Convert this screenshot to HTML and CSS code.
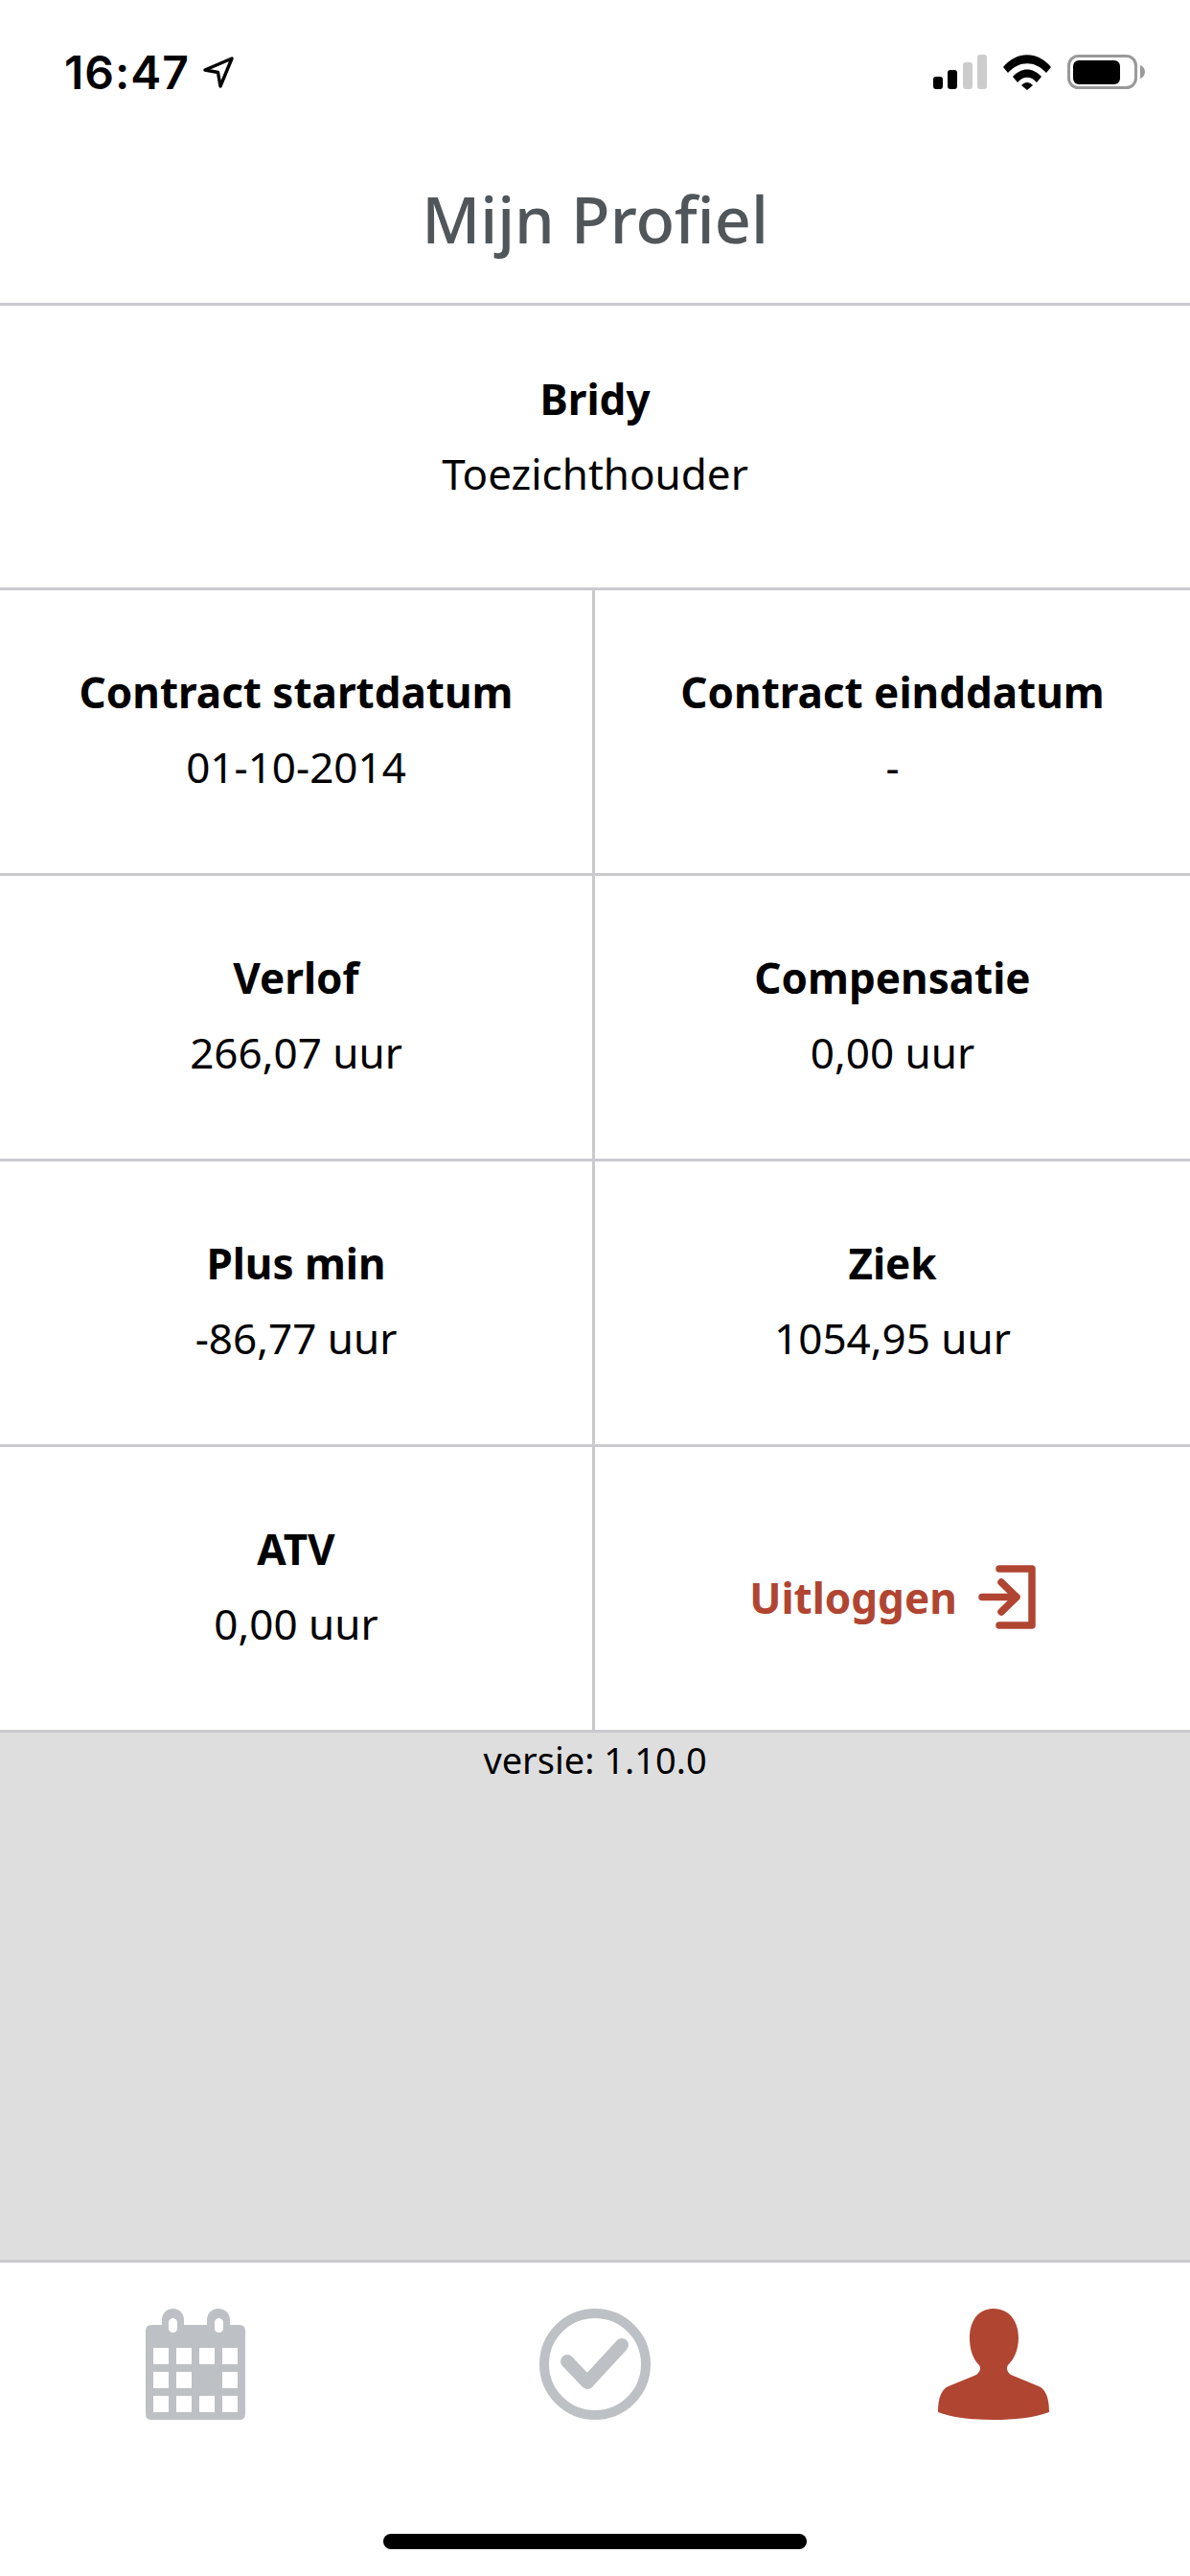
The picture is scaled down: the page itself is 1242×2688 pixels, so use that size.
FILE: index.html
```html
<!DOCTYPE html>
<html lang="nl">

<head>
    <meta charset="UTF-8">
    <title>Mijn Profiel</title>
    <meta name="viewport" content="width=device-width, initial-scale=1.0">
    <link rel="stylesheet" href="styles.css">
</head>

<body>
    <div class="app">

        <!-- Status bar -->
        <div class="status-bar">
            <div class="status-left">
                <span class="time">16:47</span>
                <svg class="loc-icon" viewBox="0 0 32 33">
                    <path d="M2 14 L30 2 L18 31 L15.5 16.5 Z" fill="none" stroke="#000" stroke-width="3.4" stroke-linejoin="round"/>
                </svg>
            </div>
            <div class="status-right">
                <svg class="signal-icon" viewBox="0 0 56 36">
                    <rect x="0" y="23" width="10" height="13" rx="3" fill="#000"/>
                    <rect x="15" y="16" width="10" height="20" rx="3" fill="#000"/>
                    <rect x="31" y="8" width="10" height="28" rx="3" fill="#ccc"/>
                    <rect x="46" y="0" width="10" height="36" rx="3" fill="#ccc"/>
                </svg>
                <svg class="wifi-icon" viewBox="0 0 50 37">
                    <path d="M0 13 C14 -4 36 -4 50 13 L45 19 C33 6 17 6 5 19 Z" fill="#000"/>
                    <path d="M10 23 C19 13 31 13 40 23 L35 29 C29 22 21 22 15 29 Z" fill="#000"/>
                    <path d="M19 32 C23 28 27 28 31 32 L25 37 Z" fill="#000"/>
                </svg>
                <svg class="battery-icon" viewBox="0 0 81 36">
                    <rect x="1.5" y="1.5" width="70" height="33" rx="10" fill="none" stroke="#999" stroke-width="3"/>
                    <rect x="6" y="6" width="49" height="25" rx="6" fill="#000"/>
                    <path d="M76 11 C79 12 81 15 81 18 C81 21 79 24 76 25 Z" fill="#999"/>
                </svg>
            </div>
        </div>

        <div class="page-title">Mijn Profiel</div>

        <div class="user-row">
            <div class="label">Bridy</div>
            <div class="value">Toezichthouder</div>
        </div>

        <div class="info-grid">
            <div class="cell">
                <div class="label">Contract startdatum</div>
                <div class="value">01-10-2014</div>
            </div>
            <div class="cell">
                <div class="label">Contract einddatum</div>
                <div class="value">-</div>
            </div>
            <div class="cell">
                <div class="label">Verlof</div>
                <div class="value">266,07 uur</div>
            </div>
            <div class="cell">
                <div class="label">Compensatie</div>
                <div class="value">0,00 uur</div>
            </div>
            <div class="cell">
                <div class="label">Plus min</div>
                <div class="value">-86,77 uur</div>
            </div>
            <div class="cell">
                <div class="label">Ziek</div>
                <div class="value">1054,95 uur</div>
            </div>
            <div class="cell">
                <div class="label">ATV</div>
                <div class="value">0,00 uur</div>
            </div>
            <div class="cell">
                <div class="logout">
                    <span>Uitloggen</span>
                    <svg class="logout-icon" viewBox="0 0 60 67">
                        <path d="M22 4 H56 V63 H22" fill="none" stroke="#b04532" stroke-width="7.5" stroke-linecap="round" stroke-linejoin="round"/>
                        <path d="M4 33.5 H40 M24 18 L40 33.5 L24 49" fill="none" stroke="#b04532" stroke-width="7.5" stroke-linecap="round" stroke-linejoin="round"/>
                    </svg>
                </div>
            </div>
        </div>

        <div class="version-panel">versie: 1.10.0</div>

        <!-- Bottom navigation -->
        <div class="tab-bar">
            <div class="tab tab-calendar">
                <svg class="calendar" viewBox="0 0 104 116">
                    <path fill-rule="evenodd" fill="#bdc0c5" d="M6 17 H17 V12 C17 -4 40 -4 40 12 V17 H64 V12 C64 -4 88 -4 88 12 V17 H98 Q104 17 104 23 V110 Q104 116 98 116 H6 Q0 116 0 110 V23 Q0 17 6 17 Z
                        M24 14.5 V20.5 C24 26.5 33 26.5 33 20.5 V14.5 C33 8.5 24 8.5 24 14.5 Z
                        M72 14.5 V20.5 C72 26.5 81 26.5 81 20.5 V14.5 C81 8.5 72 8.5 72 14.5 Z
                        M8 41 V58 H24 V41 Z M32 41 V58 H48 V41 Z M56 41 V58 H72 V41 Z M80 41 V58 H96 V41 Z
                        M8 66 V83 H24 V66 Z M32 66 V83 H48 V66 Z M80 66 V83 H96 V66 Z
                        M8 91 V108 H24 V91 Z M32 91 V108 H48 V91 Z M56 91 V108 H72 V91 Z M80 91 V108 H96 V91 Z"/>
                </svg>
            </div>
            <div class="tab">
                <svg class="check" viewBox="0 0 116 116">
                    <circle cx="58" cy="58" r="53" fill="none" stroke="#bdc0c5" stroke-width="10"/>
                    <path d="M29 55 L50 77 L86 38" fill="none" stroke="#bdc0c5" stroke-width="14" stroke-linecap="round" stroke-linejoin="round"/>
                </svg>
            </div>
            <div class="tab tab-person">
                <svg class="person" viewBox="0 0 116 116">
                    <path fill="#b04532" d="M58 0 C75 0 84 14 84 30 C84 44 79 53 73 59 C71 62 72 66 76 69 L105 81 C112 84 116 92 116 108 C100 114 80 116 58 116 C36 116 16 114 0 108 C0 92 4 84 11 81 L40 69 C44 66 45 62 43 59 C37 53 33 44 33 30 C33 14 41 0 58 0 Z"/>
                </svg>
            </div>
        </div>

        <div class="home-bar">
            <div class="home-indicator"></div>
        </div>
    </div>
</body>

</html>
```

FILE: styles.css
```css
body {
    margin: 0;
    font-family: "Noto Sans", "Open Sans", sans-serif;
    background-color: #fff;
    color: #000;
}

.app {
    width: 1242px;
    height: 2688px;
    display: flex;
    flex-direction: column;
}

.status-bar {
    height: 120px;
    box-sizing: border-box;
    padding: 57px 47px 0 67px;
    display: flex;
    justify-content: space-between;
    align-items: flex-start;
}

.status-left {
    display: flex;
    align-items: center;
    gap: 14px;
}

.time {
    font-family: "Inter", sans-serif;
    font-weight: 600;
    font-size: 48px;
    letter-spacing: 1px;
    line-height: 37px;
}

.loc-icon {
    width: 32px;
    height: 33px;
}

.status-right {
    display: flex;
    align-items: flex-start;
}

.signal-icon {
    width: 56px;
    height: 36px;
    margin-right: 17px;
}

.wifi-icon {
    width: 50px;
    height: 37px;
    margin-right: 17px;
}

.battery-icon {
    width: 81px;
    height: 36px;
}

.page-title {
    height: 199px;
    box-sizing: border-box;
    padding-top: 63px;
    border-bottom: 3px solid #c9c9ce;
    text-align: center;
    font-size: 66.5px;
    font-weight: 500;
    line-height: 90px;
    color: #50565a;
}

.user-row {
    height: 297px;
    box-sizing: border-box;
    padding-top: 66px;
    display: flex;
    flex-direction: column;
    align-items: center;
    justify-content: flex-start;
    border-bottom: 3px solid #c9c9ce;
}

.label {
    font-size: 44px;
    font-weight: 700;
    line-height: 62px;
}

.value {
    font-size: 44px;
    line-height: 60px;
    margin-top: 17px;
}

.info-grid {
    display: grid;
    grid-template-columns: 621px 621px;
    grid-auto-rows: 298px;
}

.cell {
    box-sizing: border-box;
    padding-bottom: 6px;
    border-bottom: 3px solid #c9c9ce;
    display: flex;
    flex-direction: column;
    align-items: center;
    justify-content: center;
}

.cell:nth-child(odd) {
    border-right: 3px solid #c9c9ce;
}

.logout {
    display: flex;
    align-items: center;
    gap: 22px;
    margin-top: 24px;
    color: #b04532;
    font-size: 44px;
    font-weight: 700;
}

.logout-icon {
    width: 60px;
    height: 67px;
}

.version-panel {
    height: 553px;
    box-sizing: border-box;
    background-color: #dedede;
    border-bottom: 3px solid #c9c9ce;
    text-align: center;
    font-size: 38px;
    line-height: 56px;
}

.tab-bar {
    display: grid;
    grid-template-columns: repeat(3, 1fr);
    padding-top: 48px;
}

.tab {
    display: flex;
    justify-content: center;
}

.tab-calendar {
    padding-right: 6px;
}

.tab-person {
    padding-left: 4px;
}

.calendar {
    width: 104px;
    height: 116px;
}

.check,
.person {
    width: 116px;
    height: 116px;
}

.home-bar {
    flex: 1;
    display: flex;
    align-items: flex-end;
    justify-content: center;
    padding-bottom: 28px;
}

.home-indicator {
    width: 442px;
    height: 16px;
    border-radius: 8px;
    background-color: #000;
}
```
